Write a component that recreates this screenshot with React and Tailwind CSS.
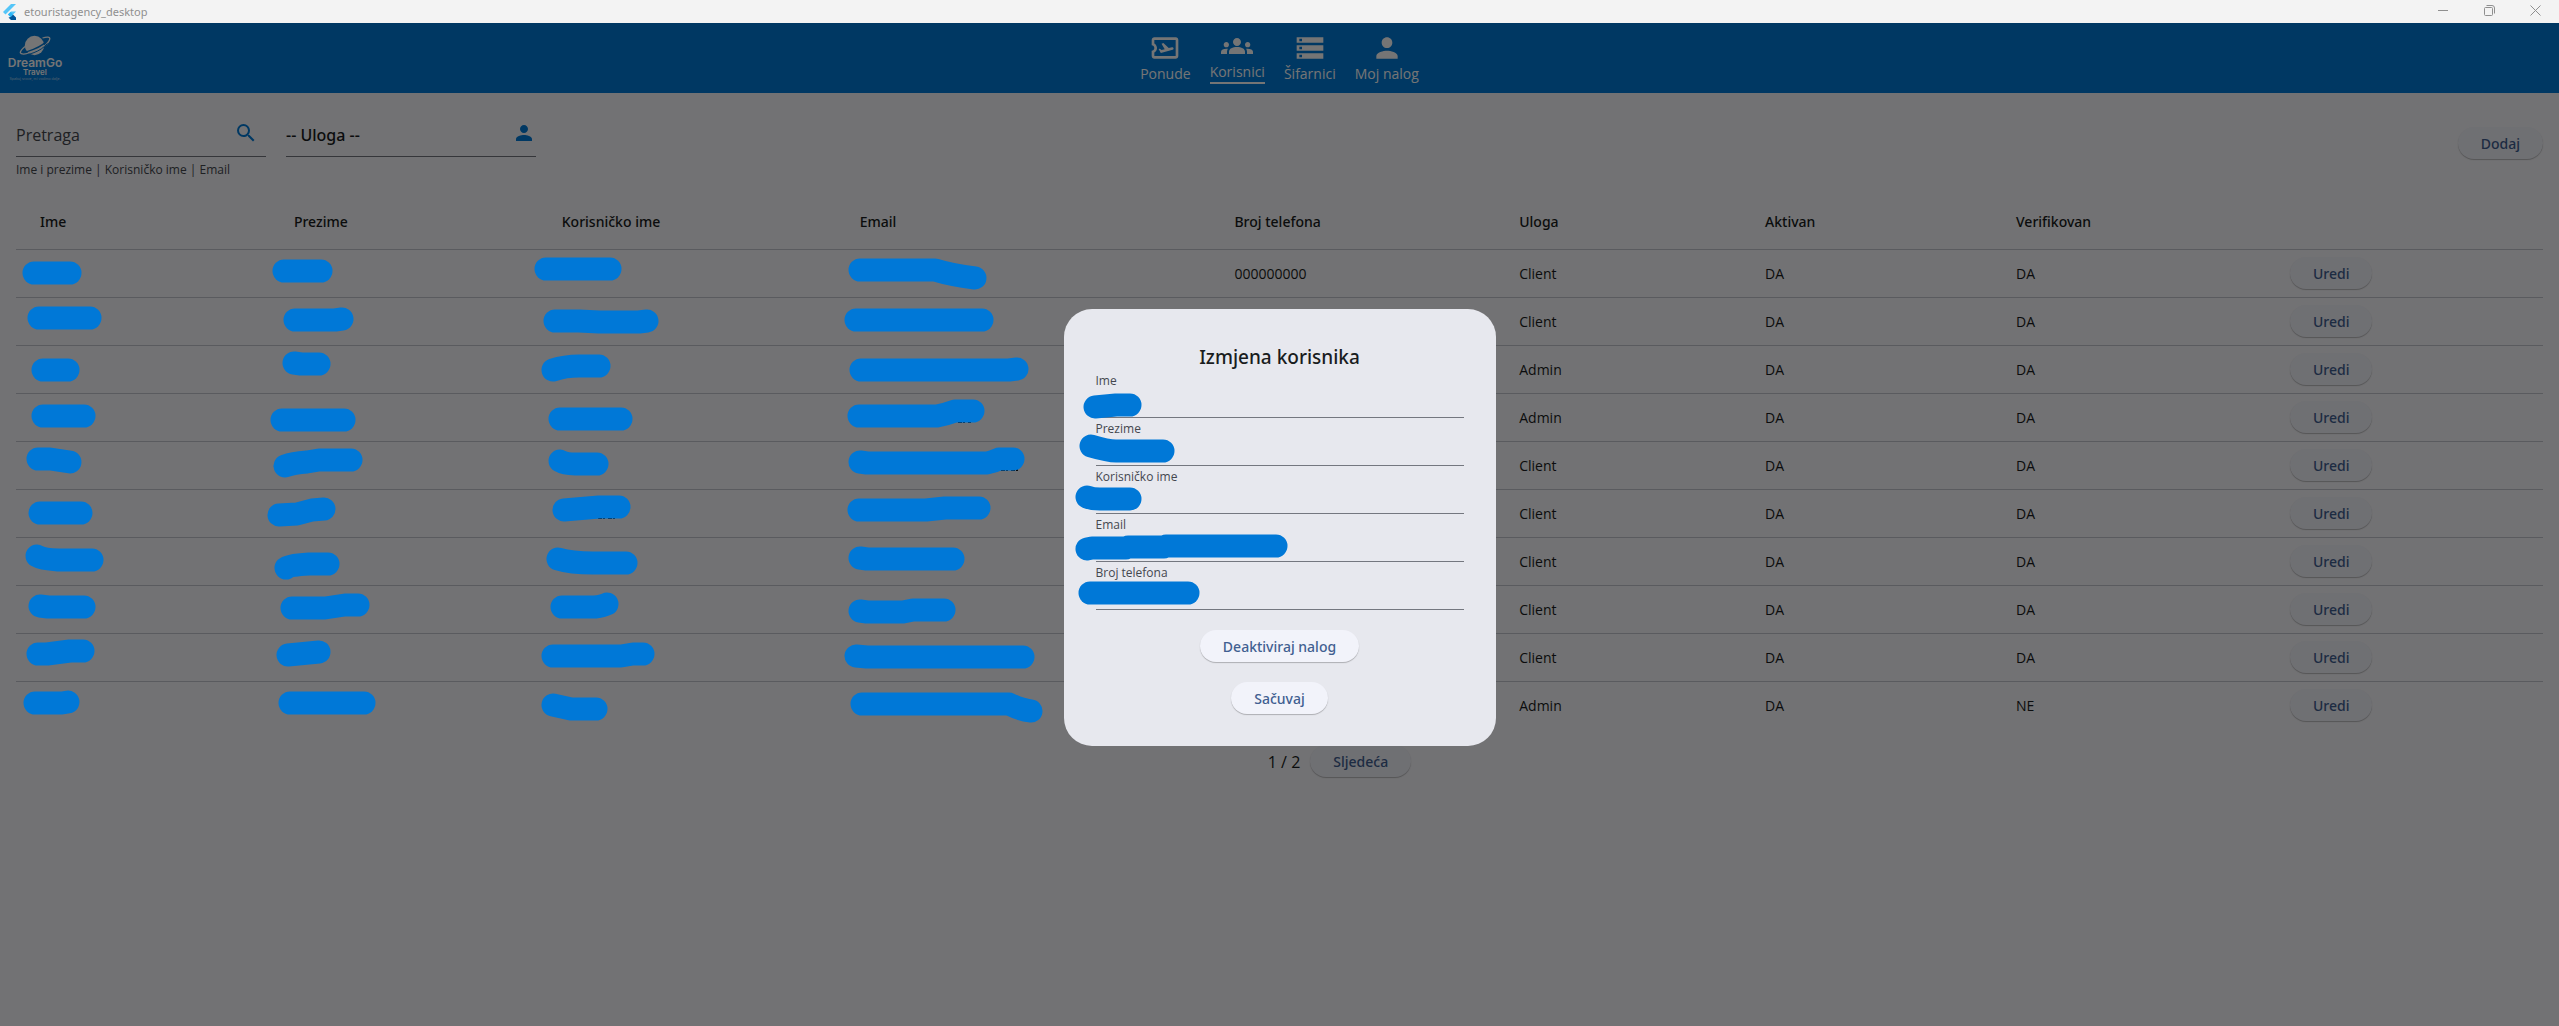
import React from "react";
import {
  MdGroups,
  MdOutlineAirplaneTicket,
  MdPerson,
  MdSearch,
  MdStorage,
} from "react-icons/md";

const columns = [
  { label: "Ime", width: "w-[9.85%]" },
  { label: "Prezime", width: "w-[10.6%]" },
  { label: "Korisničko ime", width: "w-[11.79%]" },
  { label: "Email", width: "w-[14.83%]" },
  { label: "Broj telefona", width: "w-[11.27%]" },
  { label: "Uloga", width: "w-[9.73%]" },
  { label: "Aktivan", width: "w-[9.93%]" },
  { label: "Verifikovan", width: "w-[10.84%]" },
  { label: "", width: "w-[11.16%]" },
];

// Each row holds the marker strokes that hide name, surname, username and email.
const users = [
  {
    masks: ["M18 23H54", "M19 21H56", "M13 19H77", "M29 20H104Q120 25 144 28"],
    phone: "000000000",
    role: "Client",
    verified: "DA",
  },
  {
    masks: ["M23 20H74", "M30 22H70L77 21", "M22 23H46L66 24H106L114 23", "M25 22H151"],
    role: "Client",
    verified: "DA",
  },
  {
    masks: ["M27 24H52", "M29 17L36 18H54", "M20 24Q32 20 46 20H66", "M30 24H178L186 23"],
    role: "Admin",
    verified: "DA",
  },
  {
    masks: ["M27 22H68", "M17 26H79", "M27 25H88", "M28 22H106Q116 20 124 17H142"],
    specks: [null, null, null, "M127 28H140"],
    role: "Admin",
    verified: "DA",
  },
  {
    masks: ["M22 17H34L54 20", "M20 24Q28 21 42 20L54 18H86", "M27 19Q32 22 42 22H64", "M29 20L36 21H156Q162 20 168 17H182"],
    specks: [null, null, null, "M170 28H187"],
    role: "Client",
    verified: "DA",
  },
  {
    masks: ["M24 23H65", "M14 25L32 24L47 20L59 19", "M31 20L66 17H86", "M28 20H95L114 18H148"],
    specks: [null, null, "M65 28H84", null],
    role: "Client",
    verified: "DA",
  },
  {
    masks: ["M21 18Q26 21 42 22H76", "M21 30Q24 27 44 26H63", "M25 21Q38 25 60 25H93", "M29 20L36 21H122"],
    role: "Client",
    verified: "DA",
  },
  {
    masks: ["M24 20L32 21H68", "M27 22H60L80 19H93", "M29 21H62Q70 20 74 18", "M29 25L36 26H72L82 24H113"],
    role: "Client",
    verified: "DA",
  },
  {
    masks: ["M22 20H31L54 17H67", "M23 21L54 18", "M20 22H88L100 20H110", "M25 22L36 23H192"],
    role: "Client",
    verified: "DA",
  },
  {
    masks: ["M19 21H46L52 20", "M25 21H99", "M20 23L38 27H63", "M31 22H178Q190 28 200 29"],
    role: "Admin",
    verified: "NE",
  },
];

const fields = [
  { id: "ime", label: "Ime", mask: "M-1 37L20 35H34" },
  { id: "prezime", label: "Prezime", mask: "M-5 28Q12 33 20 33H67" },
  { id: "korisnicko-ime", label: "Korisničko ime", mask: "M-9 31Q-4 33 4 33H34" },
  { id: "email", label: "Email", mask: "M-9 35L-4 34H30L32 33H68L70 32H180" },
  { id: "telefon", label: "Broj telefona", mask: "M-6 31H92" },
];

function Mask({ d, speck }) {
  return (
    <svg
      className="pointer-events-none absolute left-0 top-0 z-20 h-12 w-full overflow-visible"
      fill="none"
      aria-hidden="true"
    >
      {speck && <path d={speck} stroke="#0b0d0f" strokeWidth="2" strokeDasharray="4 1 2 3" />}
      <path d={d} stroke="#0078d7" strokeWidth="23" strokeLinecap="round" strokeLinejoin="round" />
    </svg>
  );
}

function PillButton({ children }) {
  return (
    <button
      type="button"
      className="h-8 cursor-pointer rounded-full bg-[#f2f3fa] px-[23px] pt-px align-middle font-['Noto_Sans',sans-serif] text-sm font-medium text-[#415f91] shadow-[0_1px_1px_rgba(0,0,0,0.25)]"
    >
      {children}
    </button>
  );
}

function FlutterLogo() {
  return (
    <svg viewBox="0 0 13 16" className="h-4 w-[13px]" aria-hidden="true">
      <path d="M8 0H13L2.500 10.500L0 8Z" fill="#54c5f8" />
      <path d="M8 7.500H13L7.500 13L5 10.500Z" fill="#54c5f8" />
      <path d="M7.500 13L10 10.500L13 13.500V16H8L5.500 13.500Z" fill="#01579b" />
      <path d="M5 10.500L7.500 8L10 10.500L7.500 13Z" fill="#29b6f6" />
    </svg>
  );
}

function TitleBar() {
  return (
    <div className="flex h-[23px] items-center justify-between bg-[#f3f3f3] text-[#8f8f8f]">
      <div className="flex items-center gap-2 pl-[3px]">
        <FlutterLogo />
        <span className="font-['Noto_Sans',sans-serif] text-[11px] leading-4">etouristagency_desktop</span>
      </div>
      <div className="flex h-full pb-[2px] pr-px">
        <button type="button" aria-label="Minimize" className="flex w-[46px] items-center justify-center">
          <svg viewBox="0 0 11 11" className="size-[11px]" fill="none" stroke="currentColor">
            <path d="M0 5.500H10" />
          </svg>
        </button>
        <button type="button" aria-label="Restore" className="flex w-[46px] items-center justify-center">
          <svg viewBox="0 0 11 11" className="size-[11px]" fill="none" stroke="currentColor">
            <rect x="0.500" y="2.500" width="8" height="8" rx="1" />
            <path d="M2.500 0.500H8Q10.500 0.500 10.500 3V8.500" />
          </svg>
        </button>
        <button type="button" aria-label="Close" className="flex w-[46px] items-center justify-center">
          <svg viewBox="0 0 11 11" className="size-[11px]" fill="none" stroke="currentColor">
            <path d="M0.500 0.500L10.500 10.500M10.500 0.500L0.500 10.500" />
          </svg>
        </button>
      </div>
    </div>
  );
}

function BrandLogo() {
  return (
    <svg viewBox="0 0 70 70" className="size-[70px]" role="img" aria-label="DreamGo Travel">
      <circle cx="34.500" cy="22.500" r="9.700" fill="#fff" />
      <path
        d="M20.500 29C24 30.500 42 25 48.500 16"
        fill="none"
        stroke="#007ad7"
        strokeWidth="1.400"
      />
      <path
        d="M42.500 15C47 13.500 50 13.800 49.800 15.800C49 20 42 26 35 28.500C28 31 21 32 20.300 29.800C20.300 28 22 26 25 23.500"
        fill="none"
        stroke="#fff"
        strokeWidth="1.300"
      />
      <path
        d="M47.500 20.500C44 24.500 39 27.800 34 29.600C31 30.700 29 31.200 27 31.500"
        fill="none"
        stroke="#007ad7"
        strokeWidth="1"
      />
      <text x="35" y="44" textAnchor="middle" fontSize="12" className="fill-white font-['Inter'] font-semibold">
        DreamGo
      </text>
      <text x="35" y="51.500" textAnchor="middle" fontSize="8" className="fill-white font-['Inter'] font-semibold">
        Travel
      </text>
      <text x="35" y="56.500" textAnchor="middle" fontSize="3.500" className="fill-white/70 font-['Inter']">
        Spakuj snove, mi vodimo dalje.
      </text>
    </svg>
  );
}

function NavItem({ icon: Icon, label, active }) {
  return (
    <a
      href="#"
      aria-current={active ? "page" : undefined}
      className="flex flex-col items-center text-sm leading-5 text-white"
    >
      <Icon className="size-8" />
      {active ? <span className="mb-0.5 border-b-2 border-white">{label}</span> : <span>{label}</span>}
    </a>
  );
}

function Header() {
  return (
    <header className="grid h-[70px] grid-cols-[1fr_auto_1fr] items-center bg-[#007ad7]">
      <BrandLogo />
      <nav className="flex items-center gap-[19px]">
        <NavItem icon={MdOutlineAirplaneTicket} label="Ponude" />
        <NavItem icon={MdGroups} label="Korisnici" active />
        <NavItem icon={MdStorage} label="Šifarnici" />
        <NavItem icon={MdPerson} label="Moj nalog" />
      </nav>
    </header>
  );
}

function Toolbar() {
  return (
    <div className="flex h-[68px] items-center justify-between">
      <div className="flex h-full gap-5">
        <div className="w-[250px]">
          <div className="flex h-12 items-center border-b border-[#74777f] pr-2">
            <input
              type="search"
              aria-label="Pretraga"
              aria-describedby="pretraga-opis"
              placeholder="Pretraga"
              className="min-w-0 flex-1 bg-transparent pt-1 text-base text-[#191c20] outline-none placeholder:text-[#44474e]"
            />
            <MdSearch className="size-6 text-[#007ad7]" />
          </div>
          <p id="pretraga-opis" className="pt-[5px] text-xs leading-4 text-[#44474e]">
            Ime i prezime | Korisničko ime | Email
          </p>
        </div>
        <div className="flex h-12 w-[250px] items-center border-b border-[#74777f]">
          <select
            aria-label="Uloga"
            className="min-w-0 flex-1 appearance-none bg-transparent pt-1 font-['Noto_Sans',sans-serif] text-base font-medium text-[#191c20] outline-none"
          >
            <option>-- Uloga --</option>
          </select>
          <MdPerson className="size-6 text-[#007ad7]" />
        </div>
      </div>
      <PillButton>Dodaj</PillButton>
    </div>
  );
}

function UsersTable() {
  return (
    <table className="w-full table-fixed border-collapse text-left text-sm text-[#191c20]">
      <thead>
        <tr className="h-14 border-b border-[#c4c6cf]">
          {columns.map((column, i) => (
            <th
              key={i}
              scope="col"
              className={`${column.width} ${i === 0 ? "pl-6" : "pl-[29px]"} pt-0.5 font-['Noto_Sans',sans-serif] font-medium`}
            >
              {column.label}
            </th>
          ))}
        </tr>
      </thead>
      <tbody>
        {users.map((user, i) => (
          <tr key={i} className="h-12 border-b border-[#c4c6cf] last:border-b-0">
            {user.masks.map((mask, j) => (
              <td key={j} className="relative">
                <Mask d={mask} speck={user.specks?.[j]} />
              </td>
            ))}
            <td className="pl-[29px] pt-0.5">{user.phone}</td>
            <td className="pl-[29px] pt-0.5">{user.role}</td>
            <td className="pl-[29px] pt-0.5">DA</td>
            <td className="pl-[29px] pt-0.5">{user.verified}</td>
            <td className="pl-[29px]">
              <PillButton>Uredi</PillButton>
            </td>
          </tr>
        ))}
      </tbody>
    </table>
  );
}

function Pagination() {
  return (
    <div className="mt-4 flex items-center justify-center gap-[10px]">
      <div className="w-[110px]" />
      <span className="pt-0.5 text-base text-[#191c20]">1 / 2</span>
      <PillButton>Sljedeća</PillButton>
    </div>
  );
}

function EditDialog() {
  return (
    <form
      role="dialog"
      aria-modal="true"
      aria-labelledby="dialog-title"
      className="flex w-[432px] flex-col rounded-[28px] bg-[#e7e8ee] p-8"
    >
      <h2
        id="dialog-title"
        className="h-[29px] pt-0.5 text-center font-['Noto_Sans',sans-serif] text-[19px] leading-7 font-medium text-[#191c20]"
      >
        Izmjena korisnika
      </h2>
      {fields.map((field) => (
        <div key={field.id} className="relative flex h-12 flex-col border-b border-[#74777f]">
          <label htmlFor={field.id} className="pt-[3px] text-xs leading-4 text-[#44474e]">
            {field.label}
          </label>
          <input id={field.id} className="min-h-0 w-full flex-1 bg-transparent text-base outline-none" />
          <Mask d={field.mask} />
        </div>
      ))}
      <div className="flex flex-col items-center gap-5 pt-5">
        <PillButton>Deaktiviraj nalog</PillButton>
        <PillButton>Sačuvaj</PillButton>
      </div>
    </form>
  );
}

export default function App() {
  return (
    <div className="flex min-h-screen flex-col font-['Open_Sans','Noto_Sans',sans-serif]">
      <TitleBar />
      <div className="relative flex flex-1 flex-col bg-[#f8f8fc]">
        <Header />
        <main className="flex flex-col gap-4 px-4 pt-4">
          <Toolbar />
          <div>
            <UsersTable />
            <Pagination />
          </div>
        </main>
        <div className="absolute inset-0 z-10 flex items-center justify-center bg-black/54 pt-1.5">
          <EditDialog />
        </div>
      </div>
    </div>
  );
}
